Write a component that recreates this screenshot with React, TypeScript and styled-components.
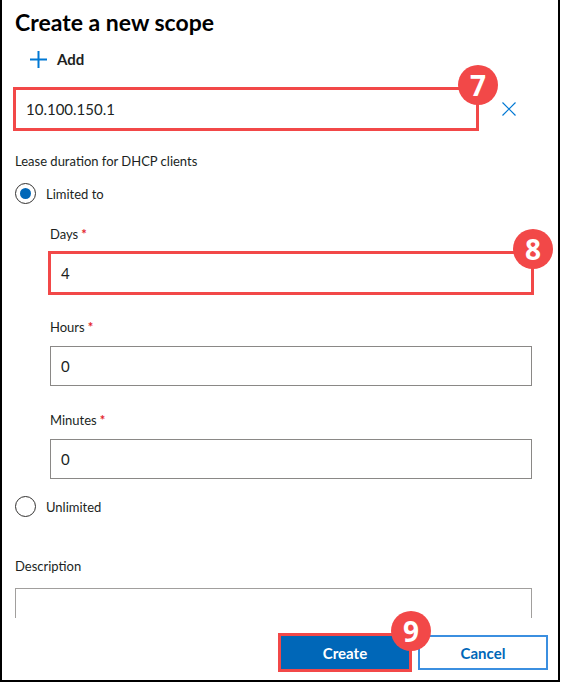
import React from 'react'
import styled, { createGlobalStyle } from 'styled-components'

const GlobalStyle = createGlobalStyle`
    html, body {
        margin: 0;
        padding: 0;
        background: #ffffff;
    }
    body {
        font-family: 'Lato', 'Noto Sans', sans-serif;
        color: #201f1e;
    }
`

const Frame = styled.div`
    box-sizing: border-box;
    width: 560px;
    height: 682px;
    border-left: 2px solid #000;
    border-right: 2px solid #000;
    border-bottom: 2px solid #000;
    display: flex;
    flex-direction: column;
    background: #fff;
`

const Scroll = styled.div`
    height: 618px;
    flex: none;
    overflow: hidden;
    padding: 0 26px 0 13px;
    display: flex;
    flex-direction: column;
    & > * {
        flex: none;
    }
`

const Title = styled.h1`
    margin: 8px 0 0;
    font-size: 23px;
    line-height: 28px;
    font-weight: 700;
    color: #000;
`

const AddButton = styled.button`
    flex: none;
    margin: 7px 0 0 15px;
    padding: 0;
    border: 0;
    background: none;
    height: 32px;
    display: flex;
    align-items: center;
    gap: 10px;
    font-family: 'Lato', sans-serif;
    font-size: 15px;
    font-weight: 700;
    color: #201f1e;
    align-self: flex-start;
`

const IpRow = styled.div`
    margin-top: 14px;
    display: flex;
    align-items: center;
`

const ClearButton = styled.button`
    flex: none;
    margin-left: 25px;
    padding: 0;
    border: 0;
    background: none;
    width: 14px;
    height: 14px;
    display: flex;
`

const Highlight = styled.div<{ $width?: number }>`
    position: relative;
    width: ${p => (p.$width ? `${p.$width}px` : '100%')};
    &::after {
        content: '';
        position: absolute;
        top: -2px;
        left: -2px;
        right: -2px;
        bottom: -2px;
        border: 3px solid #f24848;
        pointer-events: none;
    }
`

const Badge = styled.span`
    position: absolute;
    top: -24px;
    right: -21px;
    width: 40px;
    height: 40px;
    border-radius: 50%;
    background: #f24848;
    color: #fff;
    font-family: 'Noto Sans', sans-serif;
    font-size: 28px;
    font-weight: 700;
    line-height: 40px;
    text-align: center;
    z-index: 2;
`

const TextBox = styled.div<{ $width?: number }>`
    box-sizing: border-box;
    width: ${p => (p.$width ? `${p.$width}px` : '100%')};
    height: 40px;
    border: 1px solid #8a8886;
    padding: 0 10px;
    display: flex;
    align-items: center;
    font-size: 15px;
    color: #201f1e;
`

const SectionLabel = styled.div<{ $top: number }>`
    margin-top: ${p => p.$top}px;
    font-size: 13px;
    line-height: 18px;
`

const RadioRow = styled.label<{ $top: number }>`
    margin-top: ${p => p.$top}px;
    height: 21px;
    display: flex;
    align-items: center;
    gap: 10px;
    font-size: 13px;
    align-self: flex-start;
`

const RadioCircle = styled.span<{ $checked?: boolean }>`
    box-sizing: border-box;
    width: 21px;
    height: 21px;
    border-radius: 50%;
    border: 1px solid #323130;
    display: flex;
    align-items: center;
    justify-content: center;
    &::after {
        content: '';
        width: 11px;
        height: 11px;
        border-radius: 50%;
        background: ${p => (p.$checked ? '#0067b8' : 'transparent')};
    }
`

const Field = styled.div<{ $top: number }>`
    margin: ${p => p.$top}px 0 0 35px;
    display: flex;
    flex-direction: column;
`

const FieldLabel = styled.div`
    font-size: 13px;
    line-height: 18px;
    margin-bottom: 10px;
`

const Required = styled.span`
    color: #e3242b;
    margin-left: 3px;
    font-weight: 700;
`

const DescriptionBox = styled.div`
    box-sizing: border-box;
    margin-top: 13px;
    height: 60px;
    border: 1px solid #a19f9d;
`

const Footer = styled.div`
    flex: 1;
    display: flex;
    justify-content: flex-end;
    align-items: flex-start;
    gap: 8px;
    padding: 17px 10px 0 0;
`

const Button = styled.button<{ $primary?: boolean }>`
    box-sizing: border-box;
    width: 130px;
    height: 35px;
    font-family: inherit;
    font-size: 15px;
    font-weight: 700;
    border: 2px solid ${p => (p.$primary ? '#0067b8' : '#3b8fe0')};
    background: ${p => (p.$primary ? '#0067b8' : '#fff')};
    color: ${p => (p.$primary ? '#fff' : '#0067b8')};
    padding: 0;
`

const PlusIcon = () => (
    <svg width="17" height="17" viewBox="0 0 17 17">
        <path d="M8.5 0v17M0 8.5h17" stroke="#0078d4" strokeWidth="2" fill="none" />
    </svg>
)

const CloseIcon = () => (
    <svg width="14" height="14" viewBox="0 0 14 14">
        <path d="M0.5 0.5l13 13M13.5 0.5l-13 13" stroke="#0078d4" strokeWidth="1.2" fill="none" />
    </svg>
)

const fields = [
    { label: 'Days', value: '4', badge: '8' },
    { label: 'Hours', value: '0' },
    { label: 'Minutes', value: '0' },
]

const App: React.FC = () => {
    return (
        <>
            <GlobalStyle />
            <Frame>
                <Scroll>
                    <Title>Create a new scope</Title>
                    <AddButton>
                        <PlusIcon />
                        Add
                    </AddButton>
                    <IpRow>
                        <Highlight $width={462}>
                            <TextBox>10.100.150.1</TextBox>
                            <Badge>7</Badge>
                        </Highlight>
                        <ClearButton aria-label="Remove">
                            <CloseIcon />
                        </ClearButton>
                    </IpRow>
                    <SectionLabel $top={23}>Lease duration for DHCP clients</SectionLabel>
                    <RadioRow $top={13}>
                        <RadioCircle $checked />
                        Limited to
                    </RadioRow>
                    {fields.map((f, i) => (
                        <Field key={f.label} $top={i === 0 ? 21 : 25}>
                            <FieldLabel>
                                {f.label}
                                <Required>*</Required>
                            </FieldLabel>
                            {f.badge ? (
                                <Highlight>
                                    <TextBox>{f.value}</TextBox>
                                    <Badge>{f.badge}</Badge>
                                </Highlight>
                            ) : (
                                <TextBox>{f.value}</TextBox>
                            )}
                        </Field>
                    ))}
                    <RadioRow $top={17}>
                        <RadioCircle />
                        Unlimited
                    </RadioRow>
                    <SectionLabel $top={40}>Description</SectionLabel>
                    <DescriptionBox />
                </Scroll>
                <Footer>
                    <Highlight $width={130}>
                        <Button $primary>Create</Button>
                        <Badge>9</Badge>
                    </Highlight>
                    <Button>Cancel</Button>
                </Footer>
            </Frame>
        </>
    )
}

export default App
